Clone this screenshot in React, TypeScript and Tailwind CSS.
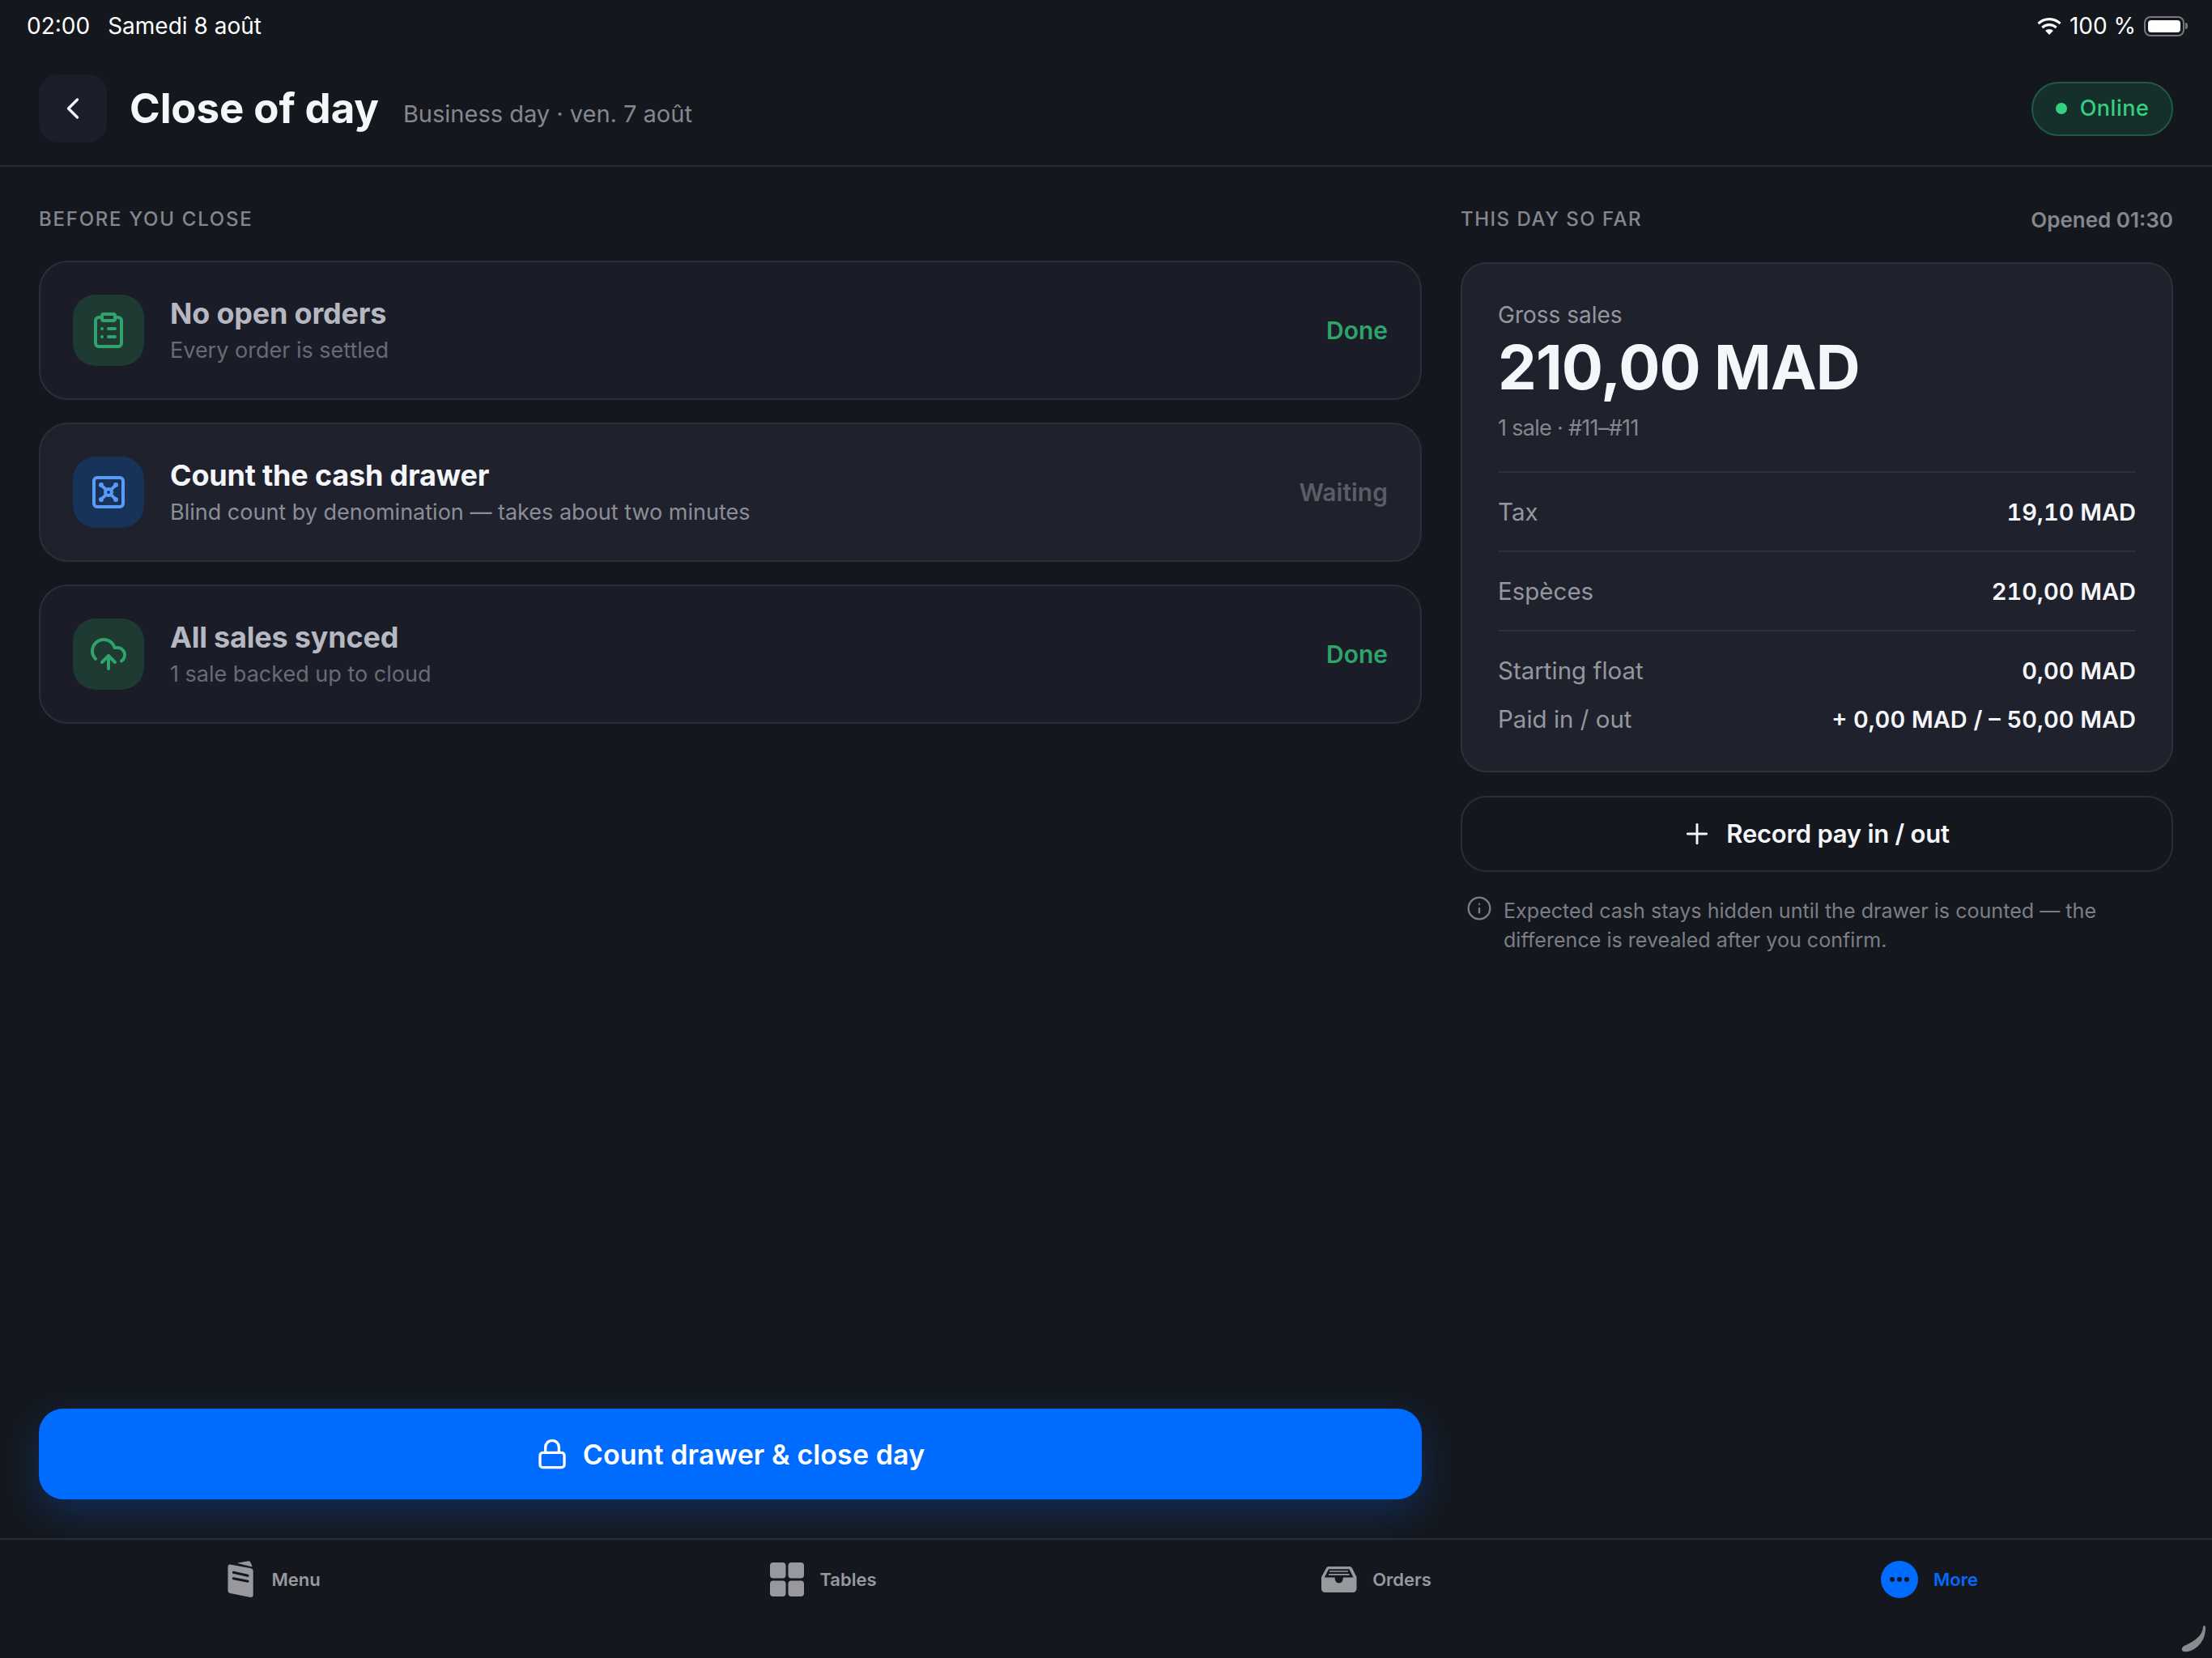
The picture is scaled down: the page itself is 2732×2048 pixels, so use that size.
import React from 'react';
import { ChevronLeft, ClipboardList, Vault, CloudUpload, Plus, Info, Lock } from 'lucide-react';

const FONT = 'font-["Inter","Liberation_Sans",sans-serif]';

const MenuIcon = () => (
  <svg width="35" height="46" viewBox="0 0 35 46">
    <path d="M11.7 2.7 L26 0.3 Q27.5 0 28.5 2 L30.7 7.5 Z" fill="#98999f" />
    <path d="M3 4.5 L28 9 Q31.7 9.7 31.7 13 L31.7 42 Q31.7 45.5 28 45 L3 40 Q0.5 39.5 0.5 37 L0.5 7 Q0.5 4.2 3 4.5 Z" fill="#98999f" />
    <path d="M7.3 14.3 L25 18.3 M7.3 21.7 L25 25.3" stroke="#14181e" strokeWidth="3" strokeLinecap="round" fill="none" />
  </svg>
);

const TablesIcon = () => (
  <svg width="42" height="42" viewBox="0 0 42 42" fill="#98999f">
    <rect x="0" y="0" width="19.5" height="19.5" rx="4" />
    <rect x="22.5" y="0" width="19.5" height="19.5" rx="4" />
    <rect x="0" y="22.5" width="19.5" height="19.5" rx="4" />
    <rect x="22.5" y="22.5" width="19.5" height="19.5" rx="4" />
  </svg>
);

const OrdersIcon = () => (
  <svg width="44" height="32" viewBox="0 0 44 32">
    <path d="M9 0 L35 0 Q37 0 38 2 L43.5 13 L43.5 27 Q43.5 32 38.5 32 L5 32 Q0 32 0 27 L0 13 L6 2 Q7 0 9 0 Z" fill="#98999f" />
    <path d="M9 3.3 L34.5 3.3 L39.5 13.5 L27 13.5 Q26.5 20.5 21.7 20.5 Q17 20.5 16.5 13.5 L3.8 13.5 Z" fill="#14181e" />
    <path d="M10 6 L33 6 M9 9.8 L34.5 9.8" stroke="#98999f" strokeWidth="1.7" />
  </svg>
);

const WifiIcon = () => (
  <svg width="30" height="21" viewBox="0 0 30 21" fill="white">
    <path d="M15 0C9.3 0 4.2 2.2 0.4 5.9L2.6 8.2C5.8 5.1 10.2 3.2 15 3.2C19.8 3.2 24.2 5.1 27.4 8.2L29.6 5.9C25.8 2.2 20.7 0 15 0Z" />
    <path d="M15 7C11.2 7 7.8 8.5 5.3 10.9L7.5 13.2C9.4 11.4 12.1 10.2 15 10.2C17.9 10.2 20.6 11.4 22.5 13.2L24.7 10.9C22.2 8.5 18.8 7 15 7Z" />
    <path d="M15 14C13.2 14 11.5 14.7 10.2 15.9L15 21L19.8 15.9C18.5 14.7 16.8 14 15 14Z" />
  </svg>
);

const Battery = () => (
  <div className="flex items-center">
    <div className="w-[50px] h-[25px] rounded-[8px] border-[2px] border-[#77787c] p-[3px]">
      <div className="w-full h-full rounded-[4px] bg-white" />
    </div>
    <div className="w-[3px] h-[8px] rounded-r-[3px] bg-[#77787c] ml-[1px]" />
  </div>
);

const checks = [
  { title: 'No open orders', sub: 'Every order is settled', status: 'Done', icon: ClipboardList, active: false },
  { title: 'Count the cash drawer', sub: 'Blind count by denomination — takes about two minutes', status: 'Waiting', icon: Vault, active: true },
  { title: 'All sales synced', sub: '1 sale backed up to cloud', status: 'Done', icon: CloudUpload, active: false },
];

const CheckCard = ({ title, sub, status, icon: Icon, active }: (typeof checks)[number]) => (
  <div className={`h-[172px] rounded-[36px] border-[2px] border-[#2b2e39] px-[40px] flex items-center gap-[32px] ${active ? 'bg-[#1f222d]' : 'bg-[#1a1d27]'}`}>
    <div className={`w-[88px] h-[88px] rounded-[28px] flex items-center justify-center ${active ? 'bg-[#17335a] text-[#5a9bf6]' : 'bg-[#1e3a33] text-[#2fa36b]'}`}>
      <Icon size={48} strokeWidth={2} />
    </div>
    <div className="flex-1 flex flex-col gap-[5px]">
      <div className={`text-[36px] leading-[44px] font-bold tracking-[-0.2px] ${active ? 'text-[#f5f6fa]' : 'text-[#b6b8c1]'}`}>{title}</div>
      <div className={`text-[27px] leading-[38px] ${active ? 'text-[#8b8e96]' : 'text-[#686b74]'}`}>{sub}</div>
    </div>
    <div className={`text-[30px] font-semibold ${status === 'Done' ? 'text-[#2fa36b]' : 'text-[#5a5c66]'}`}>{status}</div>
  </div>
);

const Divider = () => <div className="h-[2px] bg-[#2e313c]" />;

const Row = ({ label, value, className = '' }: { label: string; value: string; className?: string }) => (
  <div className={`flex items-center justify-between pt-[1px] ${className}`}>
    <span className="text-[29.5px] text-[#95979f]">{label}</span>
    <span className="text-[29px] font-semibold tabular-nums text-[#f5f6fa]">{value}</span>
  </div>
);

const tabs = [
  { label: 'Menu', icon: <MenuIcon />, active: false, shift: 'pl-[6px] pr-[12px]' },
  { label: 'Tables', icon: <TablesIcon />, active: false, shift: 'pr-[15px]' },
  { label: 'Orders', icon: <OrdersIcon />, active: false, shift: 'pr-[15px]' },
  {
    label: 'More',
    active: true,
    shift: 'pr-[15px]',
    icon: (
      <div className="w-[46px] h-[46px] rounded-full bg-[#006bff] flex items-center justify-center gap-[3px]">
        <span className="w-[6px] h-[6px] rounded-full bg-[#14181e]" />
        <span className="w-[6px] h-[6px] rounded-full bg-[#14181e]" />
        <span className="w-[6px] h-[6px] rounded-full bg-[#14181e]" />
      </div>
    ),
  },
];

export default function App() {
  return (
    <div className={`relative w-[2732px] h-[2048px] bg-[#14181e] flex flex-col overflow-hidden ${FONT}`}>
      {/* status bar */}
      <div className="h-[64px] pl-[33px] pr-[30px] flex items-center justify-between text-white text-[28px]">
        <div className="flex gap-[22px]">
          <span>02:00</span>
          <span>Samedi 8 août</span>
        </div>
        <div className="flex items-center gap-[10px]">
          <WifiIcon />
          <span>100 %</span>
          <Battery />
        </div>
      </div>

      {/* header */}
      <div className="h-[142px] px-[48px] border-b-[2px] border-[#2a2d36] flex items-center">
        <button className="w-[84px] h-[84px] rounded-[24px] bg-[#1c1f2b] flex items-center justify-center text-[#f5f6fa]">
          <ChevronLeft size={44} strokeWidth={1.8} />
        </button>
        <h1 className="ml-[28px] text-[51px] font-bold tracking-[-0.1px] text-[#f5f6fa]">Close of day</h1>
        <span className="ml-[30px] mt-[14px] text-[29px] text-[#85878d]">Business day · ven. 7 août</span>
        <div className="ml-auto w-[175px] h-[67px] rounded-full border-[2px] border-[#1f5a45] bg-[#15302b] flex items-center justify-center gap-[16px]">
          <span className="w-[14px] h-[14px] rounded-full bg-[#36cf80]" />
          <span className="text-[27px] font-medium tracking-[0.5px] text-[#36cf80]">Online</span>
        </div>
      </div>

      {/* main */}
      <div className="flex-1 flex gap-[48px] px-[48px] pt-[44px] pb-[48px]">
        <div className="flex-1 flex flex-col">
          <div className="h-[40px] pt-[2px] flex items-center text-[24px] font-medium tracking-[1.75px] text-[#85878d]">BEFORE YOU CLOSE</div>
          <div className="mt-[32px] flex flex-col gap-[28px]">
            {checks.map((c) => (
              <CheckCard key={c.title} {...c} />
            ))}
          </div>
          <button className="mt-auto h-[112px] rounded-[30px] bg-[#006bff] shadow-[0_16px_48px_rgba(0,107,255,0.25)] flex items-center justify-center gap-[18px] text-white text-[34px] font-semibold tracking-[0.1px]">
            <Lock size={40} strokeWidth={2} />
            Count drawer &amp; close day
          </button>
        </div>

        <div className="w-[880px] flex flex-col">
          <div className="h-[42px] flex items-center justify-between">
            <span className="text-[24px] font-medium tracking-[1.5px] text-[#85878d]">THIS DAY SO FAR</span>
            <span className="text-[26px] font-semibold text-[#85878d]">Opened 01:30</span>
          </div>
          <div className="mt-[32px] h-[630px] rounded-[32px] border-[2px] border-[#2e313c] bg-[#1f222d] px-[44px] pt-[44px]">
            <div className="text-[28px] leading-[38px] text-[#95979f]">Gross sales</div>
            <div className="text-[76px] leading-[90px] font-bold tracking-[-0.9px] text-[#f5f6fa]">210,00 MAD</div>
            <div className="mt-[11px] text-[27px] leading-[40px] tracking-[-0.7px] text-[#85878d]">1 sale · #11–#11</div>
            <div className="mt-[33px]"><Divider /></div>
            <Row label="Tax" value="19,10 MAD" className="h-[96px]" />
            <Divider />
            <Row label="Espèces" value="210,00 MAD" className="h-[96px]" />
            <Divider />
            <Row label="Starting float" value="0,00 MAD" className="h-[60px] mt-[18px]" />
            <Row label="Paid in / out" value="+ 0,00 MAD / – 50,00 MAD" className="h-[60px]" />
          </div>
          <button className="mt-[29px] h-[94px] pr-[4px] rounded-[32px] border-[2px] border-[#2a2d38] flex items-center justify-center gap-[16px] text-[#f5f6fa] text-[31px] font-semibold tracking-[-0.25px]">
            <Plus size={40} strokeWidth={1.75} />
            Record pay in / out
          </button>
          <div className="mt-[30px] pl-[7px] flex gap-[14px] text-[25.1px] leading-[36px] text-[#7c7e85]">
            <Info size={32} strokeWidth={1.75} className="-mt-[1px] shrink-0" />
            <p className="pr-[40px]">Expected cash stays hidden until the drawer is counted — the difference is revealed after you confirm.</p>
          </div>
        </div>
      </div>

      {/* tab bar */}
      <div className="h-[148px] border-t-[2px] border-[#2a2d36] grid grid-cols-4 pb-[96px] pt-[26px]">
        {tabs.map((t) => (
          <div key={t.label} className={`flex items-center justify-center gap-[19px] ${t.shift}`}>
            {t.icon}
            <span className={`text-[22px] font-semibold ${t.active ? 'text-[#006bff]' : 'text-[#98999f]'}`}>{t.label}</span>
          </div>
        ))}
      </div>

      {/* window grabber */}
      <svg className="absolute right-[6px] bottom-[7px]" width="32" height="34" viewBox="0 0 32 34" fill="#8a8b8f">
        <path d="M28 1 Q30 1 30 4 C30 16 24 26 14 31 Q8 34 3 33 Q0 32 1 29 Q2 26 6 25 C16 20 26 14 27 3 Q27 1 28 1 Z" />
      </svg>
    </div>
  );
}
